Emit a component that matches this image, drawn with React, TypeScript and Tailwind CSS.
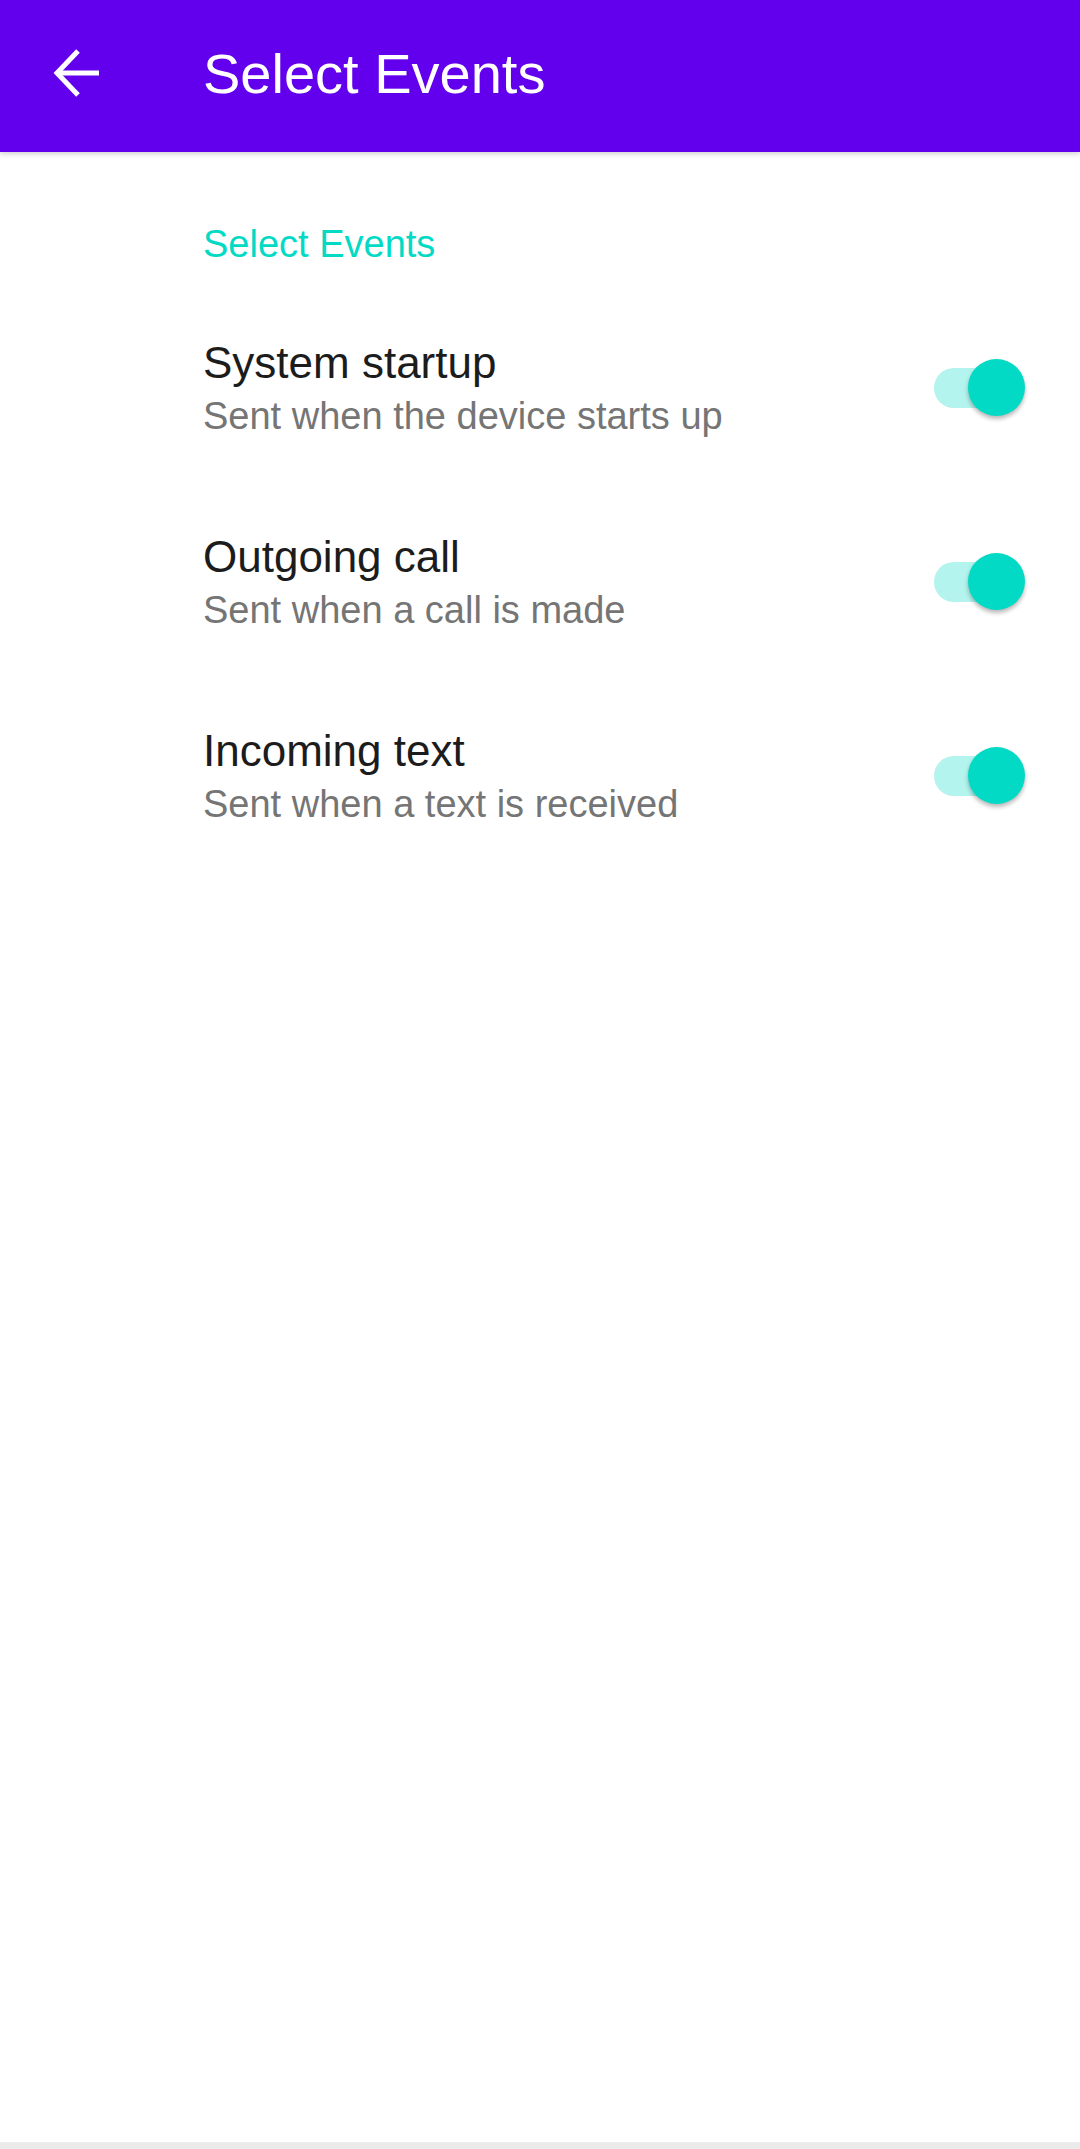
import React from 'react';

const events = [
  { title: 'System startup', desc: 'Sent when the device starts up' },
  { title: 'Outgoing call', desc: 'Sent when a call is made' },
  { title: 'Incoming text', desc: 'Sent when a text is received' },
];

function Toggle() {
  return (
    <div className="relative w-[91px] h-[57px] shrink-0">
      <div className="absolute left-0 top-[9px] w-[80px] h-[40px] rounded-full bg-[#b3f4ee]" />
      <div className="absolute right-0 top-0 w-[57px] h-[57px] rounded-full bg-[#03dac5] shadow-[0_3px_4px_rgba(0,0,0,0.28)]" />
    </div>
  );
}

export default function App() {
  return (
    <div className="w-[1080px] h-[2149px] flex flex-col bg-white font-['Liberation_Sans',Arial,sans-serif]">
      {/* Toolbar */}
      <header className="relative z-10 h-[152px] shrink-0 flex items-center bg-[#6200ee] shadow-[0_2px_5px_rgba(0,0,0,0.18)]">
        <svg className="ml-[50px] mt-[-6px] w-[52px] h-[52px] text-white" viewBox="0 0 52 52" fill="none" stroke="currentColor" strokeWidth="5">
          <path d="M8 26H49" />
          <path d="M28 4L7 26L28 48" />
        </svg>
        <h1 className="ml-[101px] mb-[5px] text-[56px] leading-none text-white">Select Events</h1>
      </header>

      {/* Preferences */}
      <main className="pt-[73px]">
        <div className="pl-[203px] text-[38px] leading-[38px] text-[#03dac5]">Select Events</div>
        <div className="mt-[74px] flex flex-col gap-[93px]">
          {events.map((e) => (
            <div key={e.title} className="flex items-center pl-[203px] pr-[55px]">
              <div className="flex-1">
                <div className="text-[44px] leading-[52px] text-[#1c1c1c]">{e.title}</div>
                <div className="mt-[5px] text-[38px] leading-[44px] text-[#757575]">{e.desc}</div>
              </div>
              <Toggle />
            </div>
          ))}
        </div>
      </main>

      <div className="flex-1" />
      <div className="h-[7px] shrink-0 bg-[#ebebeb]" />
    </div>
  );
}
